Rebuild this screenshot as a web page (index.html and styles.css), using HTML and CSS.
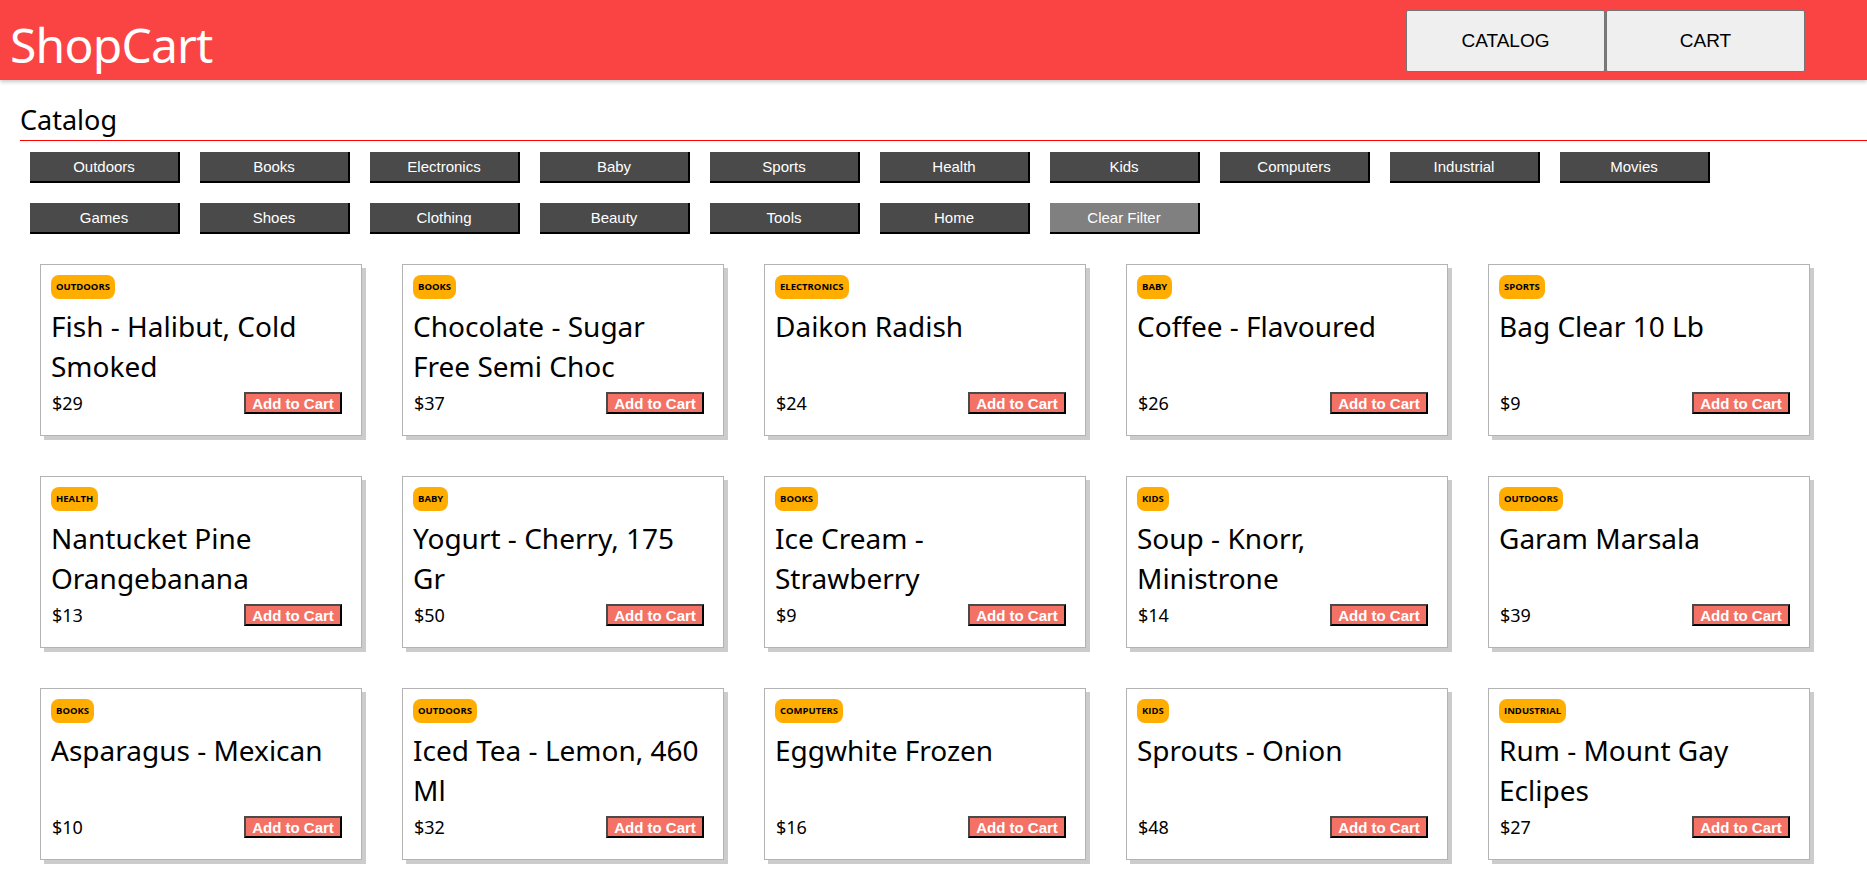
FILE: index.html
```html
<!DOCTYPE html>
<html lang="en">
<head>
<meta charset="utf-8">
<title>ShopCart</title>
<link rel="stylesheet" href="styles.css">
</head>
<body>
<header class="topbar">
  <div class="logo">ShopCart</div>
  <nav class="nav">
    <button class="nav-btn">CATALOG</button>
    <button class="nav-btn">CART</button>
  </nav>
</header>
<main>
  <h2 class="page-title">Catalog</h2>
  <div class="filters">
    <button class="filter">Outdoors</button>
    <button class="filter">Books</button>
    <button class="filter">Electronics</button>
    <button class="filter">Baby</button>
    <button class="filter">Sports</button>
    <button class="filter">Health</button>
    <button class="filter">Kids</button>
    <button class="filter">Computers</button>
    <button class="filter">Industrial</button>
    <button class="filter">Movies</button>
    <button class="filter">Games</button>
    <button class="filter">Shoes</button>
    <button class="filter">Clothing</button>
    <button class="filter">Beauty</button>
    <button class="filter">Tools</button>
    <button class="filter">Home</button>
    <button class="filter filter-clear">Clear Filter</button>
  </div>
  <div class="grid">
    <div class="card"><span class="badge">Outdoors</span><div class="title">Fish - Halibut, Cold Smoked</div><div class="foot"><span class="price">$29</span><button class="add">Add to Cart</button></div></div>
    <div class="card"><span class="badge">Books</span><div class="title">Chocolate - Sugar Free Semi Choc</div><div class="foot"><span class="price">$37</span><button class="add">Add to Cart</button></div></div>
    <div class="card"><span class="badge">Electronics</span><div class="title">Daikon Radish</div><div class="foot"><span class="price">$24</span><button class="add">Add to Cart</button></div></div>
    <div class="card"><span class="badge">Baby</span><div class="title">Coffee - Flavoured</div><div class="foot"><span class="price">$26</span><button class="add">Add to Cart</button></div></div>
    <div class="card"><span class="badge">Sports</span><div class="title">Bag Clear 10 Lb</div><div class="foot"><span class="price">$9</span><button class="add">Add to Cart</button></div></div>

    <div class="card"><span class="badge">Health</span><div class="title">Nantucket Pine Orangebanana</div><div class="foot"><span class="price">$13</span><button class="add">Add to Cart</button></div></div>
    <div class="card"><span class="badge">Baby</span><div class="title">Yogurt - Cherry, 175 Gr</div><div class="foot"><span class="price">$50</span><button class="add">Add to Cart</button></div></div>
    <div class="card"><span class="badge">Books</span><div class="title">Ice Cream - Strawberry</div><div class="foot"><span class="price">$9</span><button class="add">Add to Cart</button></div></div>
    <div class="card"><span class="badge">Kids</span><div class="title">Soup - Knorr, Ministrone</div><div class="foot"><span class="price">$14</span><button class="add">Add to Cart</button></div></div>
    <div class="card"><span class="badge">Outdoors</span><div class="title">Garam Marsala</div><div class="foot"><span class="price">$39</span><button class="add">Add to Cart</button></div></div>

    <div class="card"><span class="badge">Books</span><div class="title">Asparagus - Mexican</div><div class="foot"><span class="price">$10</span><button class="add">Add to Cart</button></div></div>
    <div class="card"><span class="badge">Outdoors</span><div class="title">Iced Tea - Lemon, 460 Ml</div><div class="foot"><span class="price">$32</span><button class="add">Add to Cart</button></div></div>
    <div class="card"><span class="badge">Computers</span><div class="title">Eggwhite Frozen</div><div class="foot"><span class="price">$16</span><button class="add">Add to Cart</button></div></div>
    <div class="card"><span class="badge">Kids</span><div class="title">Sprouts - Onion</div><div class="foot"><span class="price">$48</span><button class="add">Add to Cart</button></div></div>
    <div class="card"><span class="badge">Industrial</span><div class="title">Rum - Mount Gay Eclipes</div><div class="foot"><span class="price">$27</span><button class="add">Add to Cart</button></div></div>
  </div>
</main>
</body>
</html>
```
FILE: styles.css
```css
* { box-sizing: border-box; }
html, body { margin: 0; padding: 0; background: #fff; }
body {
  font-family: "Noto Sans", "Open Sans", sans-serif;
  color: #000;
}

.topbar {
  height: 80px;
  background: #fa4343;
  display: flex;
  justify-content: space-between;
  align-items: flex-start;
  padding: 0 62px 0 10px;
  box-shadow: 0 2px 4px rgba(0, 0, 0, 0.22);
  position: relative;
}
.logo {
  color: #fff;
  font-size: 48px;
  line-height: 68px;
  margin-top: 11px;
  letter-spacing: -0.8px;
}
.nav {
  display: flex;
  gap: 1px;
  padding-top: 10px;
}
.nav-btn {
  width: 199px;
  height: 62px;
  background: #efefef;
  border: 1px solid #767676;
  border-radius: 2px;
  font-family: "Liberation Sans", Arial, sans-serif;
  font-size: 19px;
  color: #000;
  padding: 0;
}

.page-title {
  margin: 22px 0 0 20px;
  font-size: 27px;
  font-weight: 400;
  line-height: 36px;
  padding-bottom: 2px;
  border-bottom: 1px solid #ff0000;
}

.filters {
  display: flex;
  flex-wrap: wrap;
  gap: 20px;
  padding: 11px 0 0 30px;
}
.filter {
  width: 150px;
  height: 31px;
  background: #4a4a4a;
  color: #fff;
  border: 0;
  border-right: 2px solid #000;
  border-bottom: 2px solid #000;
  font-family: "Liberation Sans", Arial, sans-serif;
  font-size: 15px;
  padding: 0;
}
.filter-clear { background: #808080; }

.grid {
  display: grid;
  grid-template-columns: repeat(5, 322px);
  column-gap: 40px;
  row-gap: 40px;
  padding: 30px 0 40px 40px;
}
.card {
  height: 172px;
  border: 1px solid #b3b3b3;
  box-shadow: 4px 4px 0 #cccccc;
  padding: 10px;
  display: flex;
  flex-direction: column;
  align-items: flex-start;
  background: #fff;
}
.badge {
  font-family: "Open Sans", "Noto Sans", sans-serif;
  font-weight: 700;
  font-size: 9.5px;
  text-transform: uppercase;
  background: #ffad00;
  color: #000;
  height: 24px;
  line-height: 24px;
  padding: 0 5px;
  border-radius: 8px;
}
.title {
  margin-top: 7px;
  font-size: 28px;
  line-height: 40px;
  height: 80px;
  width: 292px;
}
.foot {
  margin-top: 6px;
  width: 100%;
  height: 22px;
  display: flex;
  justify-content: space-between;
  align-items: center;
}
.price {
  font-size: 18px;
  padding-left: 1px;
}
.add {
  width: 98px;
  height: 22px;
  margin-right: 9px;
  background: #f47265;
  color: #fff;
  font-family: "Liberation Sans", Arial, sans-serif;
  font-weight: 700;
  font-size: 15px;
  padding: 0;
  border: 2px solid;
  border-color: #4a4a4a #000 #000 #4a4a4a;
  white-space: nowrap;
}
```
